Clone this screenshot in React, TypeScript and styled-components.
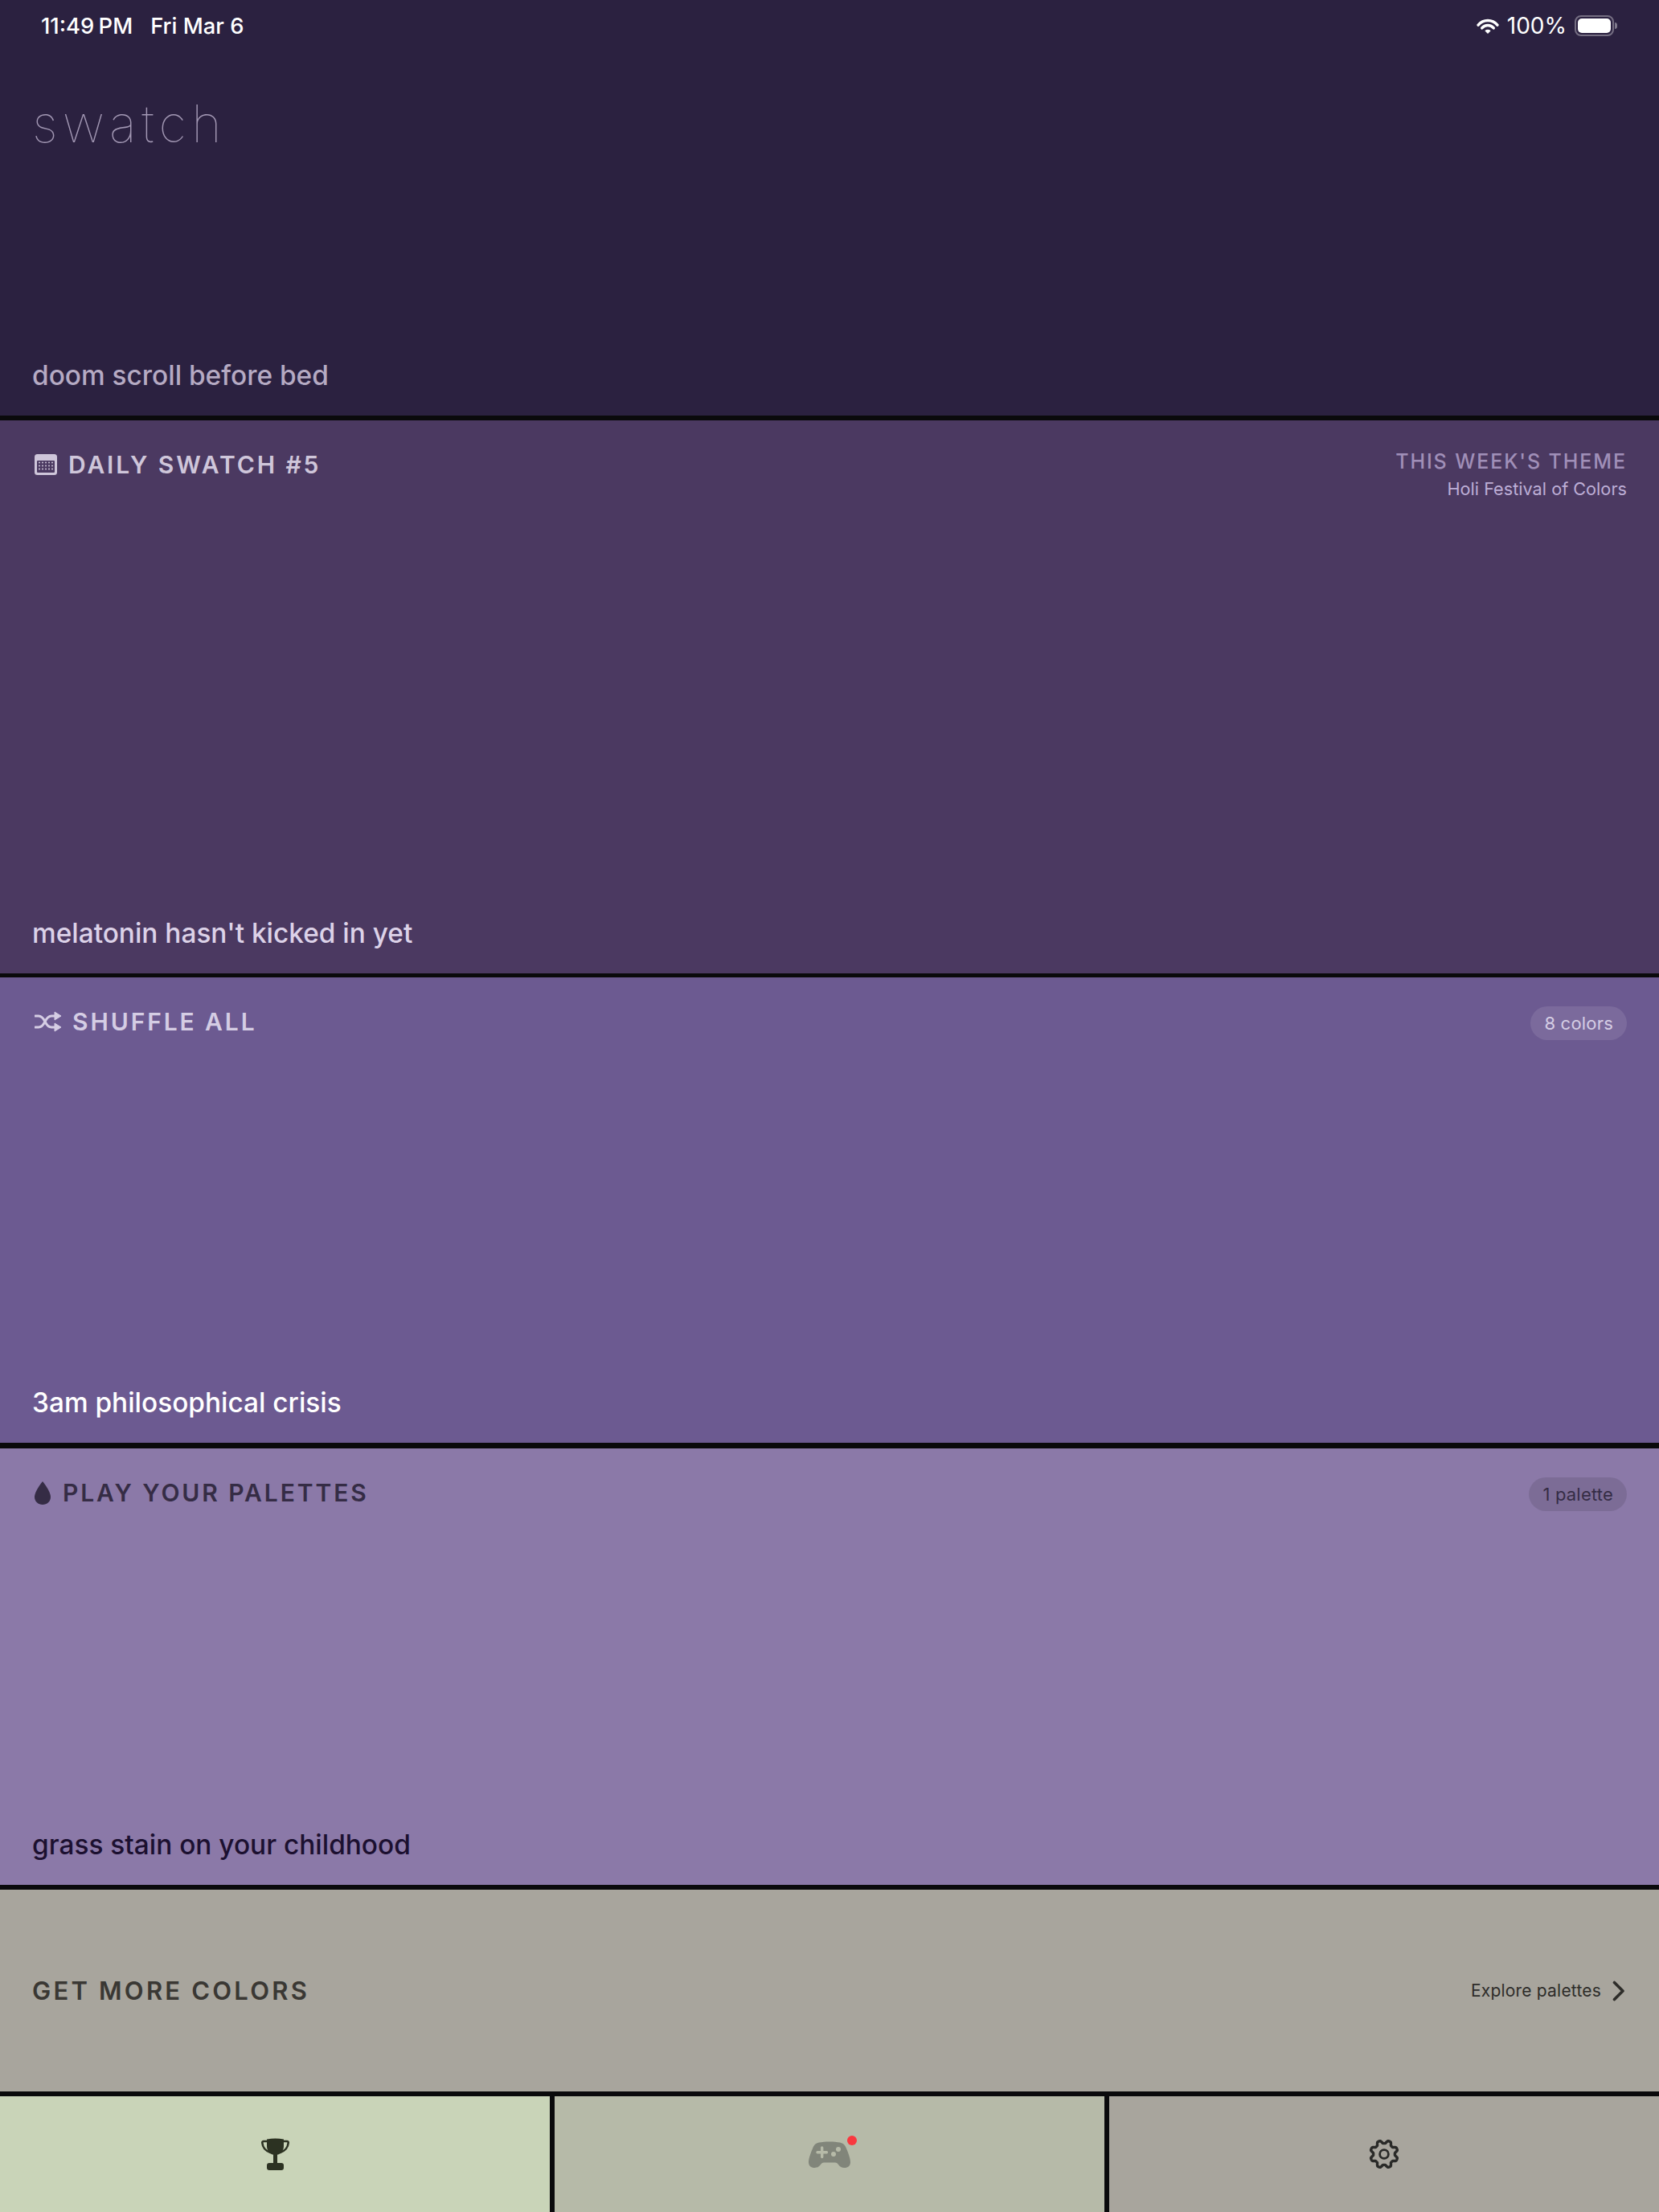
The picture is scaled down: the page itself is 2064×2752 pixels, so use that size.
import styled, { createGlobalStyle } from "styled-components";

const GlobalStyle = createGlobalStyle`
	html, body {
		margin: 0;
		padding: 0;
		background: #0a0a0c;
	}
	body {
		font-family: Inter, "Liberation Sans", sans-serif;
	}
`;

// wavy 8 lobe outline of the settings cog
const gearPath = (() => {
	const points: string[] = [];
	for (let i = 0; i < 160; i++) {
		const angle = (i / 160) * Math.PI * 2;
		const wave = Math.max(-1, Math.min(1, 1.5 * Math.cos(8 * angle + Math.PI)));
		const r = 15.3 + 1.9 * wave;
		points.push(`${(19 + r * Math.cos(angle)).toFixed(2)} ${(19 + r * Math.sin(angle)).toFixed(2)}`);
	}
	return `M${points.join("L")}Z`;
})();

const WifiIcon = () => (
	<svg width="28" height="19" viewBox="0 0 28 19" fill="none">
		<path d="M2.13 8.04A15.5 15.5 0 0 1 25.87 8.04" stroke="currentColor" strokeWidth="3.5" strokeLinecap="round" />
		<path d="M6.72 11.89A9.5 9.5 0 0 1 21.28 11.89" stroke="currentColor" strokeWidth="3.5" strokeLinecap="round" />
		<path d="M14 19L10.3 15.2Q14 12.4 17.7 15.2Z" fill="currentColor" />
	</svg>
);

const CalendarIcon = () => (
	<svg width="28" height="26" viewBox="0 0 28 26">
		<rect width="28" height="26" rx="3.5" fill="currentColor" />
		<rect x="3" y="8" width="22" height="15" rx="1" fill="#4b3961" />
		{[10.5, 14.5, 18.5].map((y) =>
			[6, 10, 14, 18, 22].map((x) => <circle key={`${x}-${y}`} cx={x} cy={y} r="1" fill="currentColor" />),
		)}
	</svg>
);

const ShuffleIcon = () => (
	<svg width="33" height="26" viewBox="0 0 33 26" fill="none">
		<path d="M1 6h4c4 0 6 3 8 7s4 7 8 7h4" stroke="currentColor" strokeWidth="3" strokeLinecap="round" />
		<path d="M1 20h4c4 0 6-3 8-7s4-7 8-7h4" stroke="currentColor" strokeWidth="3" strokeLinecap="round" />
		<path d="M25 1L33 6L25 11Z" fill="currentColor" stroke="currentColor" strokeLinejoin="round" />
		<path d="M25 15L33 20L25 25Z" fill="currentColor" stroke="currentColor" strokeLinejoin="round" />
	</svg>
);

const DropIcon = () => (
	<svg width="20" height="29" viewBox="0 0 20 29">
		<path d="M10 0C10 0 20 12 20 19.5C20 25 15.5 29 10 29C4.5 29 0 25 0 19.5C0 12 10 0 10 0Z" fill="currentColor" />
	</svg>
);

const ChevronIcon = () => (
	<svg width="16" height="26" viewBox="0 0 16 26" fill="none">
		<path d="M2.5 2.5L13 13L2.5 23.5" stroke="currentColor" strokeWidth="3.6" strokeLinecap="round" strokeLinejoin="round" />
	</svg>
);

const TrophyIcon = () => (
	<svg width="35" height="40" viewBox="0 0 35 40" fill="none">
		<path d="M7 4H3C1.8 4 1.2 4.8 1.3 6C1.8 12 5.5 16 11.5 18" stroke="currentColor" strokeWidth="2.6" strokeLinecap="round" />
		<path d="M28 4H32C33.2 4 33.8 4.8 33.7 6C33.2 12 29.5 16 23.5 18" stroke="currentColor" strokeWidth="2.6" strokeLinecap="round" />
		<path d="M7 1.5Q17.5 -0.5 28 1.5V10C28 16 24 21 17.5 21C11 21 7 16 7 10Z" fill="currentColor" />
		<rect x="15" y="19" width="5" height="14" fill="currentColor" />
		<rect x="7" y="31" width="21" height="9" rx="3" fill="currentColor" />
	</svg>
);

const GamepadIcon = () => (
	<svg width="52" height="33" viewBox="0 0 52 33">
		<path
			d="M13 1.5C20 0 32 0 39 1.5C43 2.5 45 4 47 9C50 16 52 22 52 26C52 30.5 49 33 44.5 33C41 33 39 31.5 37 29C36 27.5 35 26.5 33 26.5H19C17 26.5 16 27.5 15 29C13 31.5 11 33 7.5 33C3 33 0 30.5 0 26C0 22 2 16 5 9C7 4 9 2.5 13 1.5Z"
			fill="currentColor"
		/>
		<path d="M16.7 8V19.5M11 13.7H22.5" stroke="#b6baa8" strokeWidth="3.4" strokeLinecap="round" />
		<circle cx="37" cy="10" r="3" fill="#b6baa8" />
		<circle cx="31" cy="16" r="3" fill="#b6baa8" />
	</svg>
);

const GearIcon = () => (
	<svg width="38" height="38" viewBox="0 0 38 38" fill="none">
		<path d={gearPath} stroke="currentColor" strokeWidth="3.4" strokeLinejoin="round" />
		<circle cx="19" cy="19" r="5.4" stroke="currentColor" strokeWidth="2.8" />
	</svg>
);

const App = () => {
	return (
		<Page>
			<GlobalStyle />
			<Band $bg="#2b2140" $height={523}>
				<StatusBar>
					<StatusGroup>
						<Time>11:49 PM</Time>
						<StatusDate>Fri Mar 6</StatusDate>
					</StatusGroup>
					<StatusRight>
						<WifiIcon />
						<Percent>100%</Percent>
						<Battery>
							<BatteryFill />
						</Battery>
						<BatteryCap />
					</StatusRight>
				</StatusBar>
				<Logo>swatch</Logo>
				<Tagline $color="#b5aac3">doom scroll before bed</Tagline>
			</Band>

			<Band $bg="#4b3961" $height={693} $rule={5}>
				<BandHeader>
					<Heading $color="#cfc6da" $gap={14}>
						<CalendarIcon />
						DAILY SWATCH #5
					</Heading>
					<Theme>
						<ThemeLabel>THIS WEEK'S THEME</ThemeLabel>
						<ThemeName>Holi Festival of Colors</ThemeName>
					</Theme>
				</BandHeader>
				<Tagline $color="#dcd2e8">melatonin hasn't kicked in yet</Tagline>
			</Band>

			<Band $bg="#6c5a91" $height={586} $rule={7}>
				<BandHeader>
					<Heading $color="#d5cde4" $gap={14}>
						<ShuffleIcon />
						SHUFFLE ALL
					</Heading>
					<Pill $bg="rgba(255, 255, 255, 0.1)" $color="#d5cde4">
						8 colors
					</Pill>
				</BandHeader>
				<Tagline $color="#ffffff">3am philosophical crisis</Tagline>
			</Band>

			<Band $bg="#8b79a8" $height={549}>
				<BandHeader>
					<Heading $color="#352c45" $gap={15}>
						<DropIcon />
						PLAY YOUR PALETTES
					</Heading>
					<Pill $bg="rgba(0, 0, 0, 0.1)" $color="#352c45">
						1 palette
					</Pill>
				</BandHeader>
				<Tagline $color="#1c1030">grass stain on your childhood</Tagline>
			</Band>

			<MoreRow>
				<MoreTitle>GET MORE COLORS</MoreTitle>
				<Explore>
					Explore palettes
					<ChevronIcon />
				</Explore>
			</MoreRow>

			<TabBar>
				<Tab $bg="#c9d4b8" $color="#2c3222">
					<TrophyIcon />
				</Tab>
				<Tab $bg="#b6baa8" $color="#81857a">
					<IconWrap>
						<GamepadIcon />
						<RedDot />
					</IconWrap>
				</Tab>
				<Tab $bg="#a8a59d" $color="#2a2a28">
					<GearIcon />
				</Tab>
			</TabBar>
		</Page>
	);
};

export default App;

//STYLES
const Page = styled.div`
	width: 2064px;
	height: 2752px;
	display: flex;
	flex-direction: column;
	overflow: hidden;
	background: #0a0a0c;
`;

const Band = styled.section<{ $bg: string; $height: number; $rule?: number }>`
	height: ${(props) => props.$height}px;
	background: ${(props) => props.$bg};
	border-bottom: ${(props) => props.$rule ?? 6}px solid #0a0a0c;
	padding: 36px 40px 28px;
	box-sizing: border-box;
	display: flex;
	flex-direction: column;
`;

const StatusBar = styled.div`
	display: flex;
	justify-content: space-between;
	align-items: center;
	color: #ffffff;
	font-weight: 500;
	margin: -22px 12px 0 11px;
	height: 36px;
`;

const StatusGroup = styled.div`
	display: flex;
	align-items: center;
	font-size: 27.4px;
`;

const StatusRight = styled(StatusGroup)`
	font-size: 28px;
`;

const Time = styled.span`
	word-spacing: -2px;
`;

const StatusDate = styled.span`
	margin-left: 22px;
`;

const Percent = styled.span`
	margin-left: 10px;
	font-weight: 400;
`;

const Battery = styled.div`
	width: 49px;
	height: 26px;
	margin-left: 10px;
	padding: 2px;
	box-sizing: border-box;
	border: 2px solid rgba(255, 255, 255, 0.35);
	border-radius: 8px;
`;

const BatteryFill = styled.div`
	width: 100%;
	height: 100%;
	background: #ffffff;
	border-radius: 5px;
`;

const BatteryCap = styled.div`
	width: 3px;
	height: 8px;
	margin-left: 1px;
	background: rgba(255, 255, 255, 0.4);
	border-radius: 0 3px 3px 0;
`;

const Logo = styled.h1`
	margin: 63px 0 0;
	font-size: 64px;
	line-height: 82px;
	font-weight: 100;
	letter-spacing: 6.4px;
	color: #a398b4;
`;

const Tagline = styled.div<{ $color: string }>`
	margin-top: auto;
	font-size: 33.4px;
	line-height: 44px;
	font-weight: 500;
	color: ${(props) => props.$color};
`;

const BandHeader = styled.div`
	display: flex;
	justify-content: space-between;
	align-items: flex-start;
`;

const Heading = styled.div<{ $color: string; $gap: number }>`
	display: flex;
	align-items: center;
	gap: ${(props) => props.$gap}px;
	font-size: 30px;
	line-height: 38px;
	font-weight: 600;
	letter-spacing: 2.9px;
	margin-left: 3px;
	color: ${(props) => props.$color};
`;

const Theme = styled.div`
	text-align: right;
`;

const ThemeLabel = styled.div`
	font-size: 25px;
	line-height: 30px;
	font-weight: 500;
	letter-spacing: 1.9px;
	color: #a08fb8;
`;

const ThemeName = styled.div`
	font-size: 21.7px;
	line-height: 38px;
	color: #bdaed6;
`;

const Pill = styled.div<{ $bg: string; $color: string }>`
	padding: 0 17px;
	height: 42px;
	display: flex;
	align-items: center;
	border-radius: 21px;
	font-size: 22px;
	letter-spacing: 0.2px;
	background: ${(props) => props.$bg};
	color: ${(props) => props.$color};
`;

const MoreRow = styled.div`
	height: 257px;
	padding: 0 40px;
	border-bottom: 6px solid #0a0a0c;
	box-sizing: border-box;
	display: flex;
	justify-content: space-between;
	align-items: center;
	background: #a8a59d;
`;

const MoreTitle = styled.div`
	font-size: 31px;
	font-weight: 600;
	letter-spacing: 3.2px;
	color: #3a3834;
`;

const Explore = styled.div`
	display: flex;
	align-items: center;
	gap: 14px;
	margin-right: 2px;
	font-size: 21px;
	letter-spacing: 0.2px;
	color: #2e2d2a;
`;

const TabBar = styled.nav`
	flex: 1;
	display: flex;
	gap: 6px;
`;

const Tab = styled.div<{ $bg: string; $color: string }>`
	flex: 1;
	display: flex;
	align-items: center;
	justify-content: center;
	background: ${(props) => props.$bg};
	color: ${(props) => props.$color};
`;

const IconWrap = styled.div`
	position: relative;
	display: flex;
`;

const RedDot = styled.div`
	position: absolute;
	top: -7px;
	right: -8px;
	width: 12px;
	height: 12px;
	border-radius: 50%;
	background: #f9383f;
`;
